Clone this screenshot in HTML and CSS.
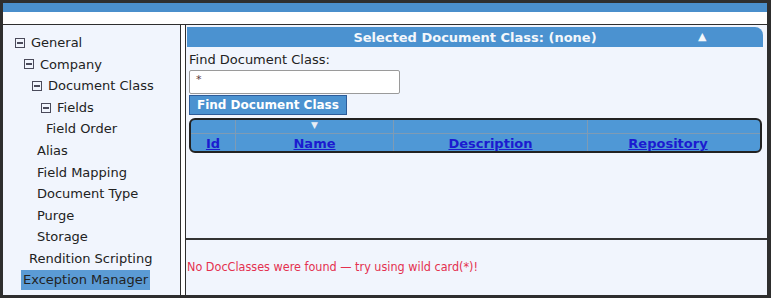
FILE: index.html
```html
<!DOCTYPE html>
<html lang="en">
<head>
    <meta charset="UTF-8">
    <title>Document Class Manager</title>
    <link rel="stylesheet" href="styles.css">
</head>
<body>
    <div class="window">
        <div class="topbar"></div>
        <div class="strip"></div>
        <div class="main">
            <div class="tree">
                <div class="node lv0"><span class="box"></span>General</div>
                <div class="node lv1"><span class="box"></span>Company</div>
                <div class="node lv2"><span class="box"></span>Document Class</div>
                <div class="node lv3"><span class="box"></span>Fields</div>
                <div class="node leaf4">Field Order</div>
                <div class="node leaf3">Alias</div>
                <div class="node leaf3">Field Mapping</div>
                <div class="node leaf3">Document Type</div>
                <div class="node leaf3">Purge</div>
                <div class="node leaf3">Storage</div>
                <div class="node leaf2">Rendition Scripting</div>
                <div class="node leaf1"><span class="selected">Exception Manager</span></div>
            </div>
            <div class="pane">
                <div class="pane-top">
                    <div class="header">
                        <span class="title">Selected Document Class: (none)</span>
                        <span class="collapse">&#9650;</span>
                    </div>
                    <div class="find">
                        <label class="find-label">Find Document Class:</label>
                        <div class="input">*</div>
                        <div class="button">Find Document Class</div>
                    </div>
                    <div class="grid">
                        <div class="grid-row sort-row">
                            <div class="cell c-id"></div>
                            <div class="cell c-name">&#9660;</div>
                            <div class="cell c-desc"></div>
                            <div class="cell c-repo"></div>
                        </div>
                        <div class="grid-row head-row">
                            <div class="cell c-id"><a href="#">Id</a></div>
                            <div class="cell c-name"><a href="#">Name</a></div>
                            <div class="cell c-desc"><a href="#">Description</a></div>
                            <div class="cell c-repo"><a href="#">Repository</a></div>
                        </div>
                    </div>
                </div>
                <div class="message">No DocClasses were found &mdash; try using wild card(*)!</div>
            </div>
        </div>
    </div>
</body>
</html>
```

FILE: styles.css
```css
body { margin: 0; background: #2e2e2e; font-family: "DejaVu Sans", Verdana, sans-serif; font-size: 13px; color: #222; }
.window { width: 764px; height: 292px; padding: 3px 4px 3px 3px; display: flex; flex-direction: column; }
.topbar { height: 9px; background: #4a8fcc; }
.strip { height: 12px; background: #fff; border-bottom: 1px solid #2e2e2e; }
.main { flex: 1; display: flex; background: #fff; overflow: hidden; }
.tree { width: 177px; background: #f1f5fd; border-right: 1px solid #2e2e2e; padding-top: 7px; overflow: hidden; }
.node { height: 21.6px; line-height: 21.6px; white-space: nowrap; display: flex; align-items: center; }
.box { width: 8px; height: 8px; border: 1px solid #4a4a5a; margin-right: 6px; position: relative; flex-shrink: 0; }
.box::after { content: ""; position: absolute; left: 1px; right: 1px; top: 3px; height: 2px; background: #4a4a5a; }
.lv0 { padding-left: 12px; }
.lv1 { padding-left: 21px; }
.lv2 { padding-left: 29px; }
.lv3 { padding-left: 38px; }
.leaf4 { padding-left: 43px; }
.leaf3 { padding-left: 34px; }
.leaf2 { padding-left: 26px; }
.leaf1 { padding-left: 18px; }
.selected { background: #5b9bd5; padding: 0 2px; line-height: 20px; }
.pane { flex: 1; margin-left: 4px; border-left: 1px solid #2e2e2e; background: #f1f5fd; display: flex; flex-direction: column; }
.pane-top { height: 211px; padding: 2px 4px 0 1px; border-bottom: 2px solid #333; }
.header { height: 20px; background: #4b92d0; color: #f4f7fb; font-weight: bold; border-top-right-radius: 8px; display: flex; align-items: center; position: relative; }
.title { flex: 1; text-align: center; font-size: 13px; }
.collapse { position: absolute; left: 511px; top: 3px; font-size: 11px; }
.find { padding: 4px 2px 0; }
.find-label { display: block; line-height: 17px; }
.input { width: 203px; height: 22px; margin-top: 2px; border: 1px solid #9a9a9a; border-radius: 2px; background: #fff; padding-left: 6px; font-size: 11px; line-height: 18px; color: #5a3a3a; box-sizing: content-box; }
.button { display: inline-block; margin-top: 1px; height: 18px; line-height: 18px; padding: 0 7px; background: #4b92d0; border: 1px solid #2d5c99; color: #fff; font-weight: bold; font-size: 12px; }
.grid { margin: 3px 1px 0 2px; border: 2px solid #222; border-radius: 6px; background: #4f98d6; overflow: hidden; }
.grid-row { display: grid; grid-template-columns: 44px 158px 194px 1fr; }
.cell { text-align: center; border-left: 1px solid #7e9bb5; }
.cell:first-child { border-left: none; }
.c-repo { padding-right: 12px; }
.sort-row { height: 13px; border-bottom: 1px solid #7e9bb5; }
.sort-row .c-name { color: #e8eef5; font-size: 9px; line-height: 11px; }
.head-row { height: 17px; line-height: 20px; }
.head-row a { color: #1b1bd0; font-weight: bold; font-size: 13px; }
.message { padding: 18px 1px; color: #e4304f; font-family: "DejaVu Sans Condensed", "DejaVu Sans", sans-serif; font-size: 12.5px; line-height: 17px; }
```
